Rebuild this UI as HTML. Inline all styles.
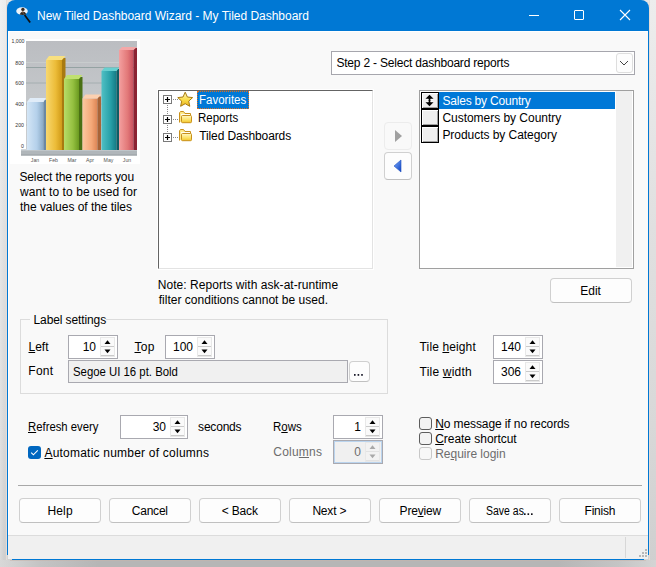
<!DOCTYPE html>
<html><head><meta charset="utf-8"><style>
html,body{margin:0;padding:0}
body{width:656px;height:567px;overflow:hidden;position:relative;background:#e4e4e4;font-family:"Liberation Sans", sans-serif;font-size:12px}
.t{position:absolute;white-space:pre;line-height:15px;font-size:12px;color:#000}
.t u{text-decoration:underline;text-underline-offset:1px}
.a{position:absolute}
.box{position:absolute;box-sizing:border-box;border:1px solid #a9a9b0}
.spn{position:absolute;width:15px;background:#e8e8e8}
.sb{position:absolute;left:1px;width:13px;height:9px;background:#fafafa;border-bottom:1px solid #cacaca;box-sizing:border-box}
.btn{position:absolute;box-sizing:border-box;border:1px solid #d0d0d0;border-bottom-color:#c0c0c0;border-radius:4px;background:#fdfdfd}
.chk{position:absolute;box-sizing:border-box;width:13px;height:13px;border:1px solid #5d5d5d;border-radius:3px;background:#f3f3f3}
</style></head><body>
<!-- shadow -->
<div class=a style="left:0;top:0;width:7px;height:567px;background:linear-gradient(180deg,#ededed 0%,#e0e0e0 40%,#d8d8d8 75%,#cfcfcf 100%)"></div>
<div class=a style="left:0;top:0;width:4px;height:567px;background:linear-gradient(90deg,rgba(255,255,255,0.25),rgba(255,255,255,0))"></div>
<div class=a style="left:6px;top:0;width:1px;height:560px;background:#e6dcd6"></div>
<div class=a style="left:649px;top:0;width:7px;height:567px;background:linear-gradient(180deg,#ededed 0%,#e0e0e0 40%,#d8d8d8 75%,#cfcfcf 100%)"></div>
<div class=a style="left:649px;top:0;width:1px;height:560px;background:#e6dcd6"></div>
<div class=a style="left:0;top:560px;width:656px;height:7px;background:linear-gradient(90deg,#d8d8d8 0%,#c4c4c4 6%,#b6b6b6 15%,#b6b6b6 85%,#c4c4c4 94%,#d4d4d4 100%)"></div>
<div class=a style="left:10px;top:560px;width:636px;height:1px;background:rgba(200,180,170,0.5)"></div>
<!-- window -->
<div class=a style="left:7px;top:0;width:642px;height:560px;background:#0078d4;border-radius:8px 8px 2px 2px"></div>
<div class=a style="left:8px;top:31px;width:640px;height:528px;background:#fff"></div>
<div class=a style="left:9px;top:32px;width:639px;height:527px;background:#f9f9f9"></div>
<div class=a style="left:7px;top:555px;width:1px;height:5px;background:#d2d2d2"></div>
<div class=a style="left:7px;top:559px;width:5px;height:1px;background:#d2d2d2"></div>
<div class=a style="left:648px;top:555px;width:1px;height:5px;background:#d2d2d2"></div>
<div class=a style="left:644px;top:559px;width:5px;height:1px;background:#d2d2d2"></div>
<!-- status bar -->
<div class=a style="left:8px;top:535px;width:640px;height:24px;background:#f0f0f0;border-top:1px solid #dcdcdc;box-sizing:border-box"></div>
<div class=a style="left:625px;top:537px;width:1px;height:21px;background:#d7d7d7"></div>
<svg class=a style="left:637px;top:548px" width="12" height="12">
<g fill="#b8b8b8"><rect x="8" y="1" width="2" height="2"/><rect x="5" y="4" width="2" height="2"/><rect x="8" y="4" width="2" height="2"/>
<rect x="2" y="7" width="2" height="2"/><rect x="5" y="7" width="2" height="2"/><rect x="8" y="7" width="2" height="2"/></g></svg>
<!-- title icon -->
<svg class=a style="left:14px;top:5px" width="20" height="20">
<ellipse cx="8" cy="6.1" rx="5.8" ry="3.8" fill="#eef3f8"/>
<circle cx="8.9" cy="4.4" r="1.7" fill="#3a2a20"/>
<path d="M5.6 9.6 Q6.5 7 8.9 6.6 Q11.3 7 12.4 9.2 Q9 10.4 5.6 9.6 Z" fill="#2e2620"/>
<path d="M8.2 6 L9.4 8.5" stroke="#b08060" stroke-width="0.8"/>
<line x1="10.6" y1="10" x2="16.2" y2="17.6" stroke="#111" stroke-width="1.7"/>
</svg>
<!-- title buttons -->
<div class=a style="left:529px;top:15px;width:10px;height:1px;background:#fff"></div>
<div class=a style="left:574px;top:10px;width:10px;height:10px;box-sizing:border-box;border:1px solid #fff;border-radius:1px"></div>
<svg class=a style="left:619px;top:9px" width="12" height="12"><path d="M1 1 L11 11 M11 1 L1 11" stroke="#fff" stroke-width="1.1"/></svg>
<!-- chart -->
<svg class=a style="left:9px;top:36px" width="131" height="128" viewBox="9 36 131 128">
<defs>
<linearGradient id="pg" x1="0" y1="0" x2="0" y2="1"><stop offset="0" stop-color="#bbbdc1"/><stop offset="0.5" stop-color="#c4c7ca"/><stop offset="1" stop-color="#cacdd0"/></linearGradient>
<linearGradient id="b1" x1="0" y1="0" x2="1" y2="0"><stop offset="0" stop-color="#d4e6f6"/><stop offset="0.6" stop-color="#b4d0ea"/><stop offset="1" stop-color="#88a8c4"/></linearGradient>
<linearGradient id="b2" x1="0" y1="0" x2="1" y2="0"><stop offset="0" stop-color="#f8d870"/><stop offset="0.6" stop-color="#ecbc38"/><stop offset="1" stop-color="#d09a18"/></linearGradient>
<linearGradient id="b3" x1="0" y1="0" x2="1" y2="0"><stop offset="0" stop-color="#b8dc68"/><stop offset="0.6" stop-color="#94c040"/><stop offset="1" stop-color="#6a9a20"/></linearGradient>
<linearGradient id="b4" x1="0" y1="0" x2="1" y2="0"><stop offset="0" stop-color="#fcc8a0"/><stop offset="0.6" stop-color="#f4a878"/><stop offset="1" stop-color="#dc8454"/></linearGradient>
<linearGradient id="b5" x1="0" y1="0" x2="1" y2="0"><stop offset="0" stop-color="#50c0c4"/><stop offset="0.6" stop-color="#28a0a8"/><stop offset="1" stop-color="#147a84"/></linearGradient>
<linearGradient id="b6" x1="0" y1="0" x2="1" y2="0"><stop offset="0" stop-color="#f4a0a0"/><stop offset="0.6" stop-color="#e27878"/><stop offset="1" stop-color="#c85060"/></linearGradient>
</defs>
<rect x="10" y="39" width="130" height="125" fill="#fff"/>
<rect x="26" y="41" width="111" height="110" fill="url(#pg)"/>
<rect x="21" y="149" width="116" height="6.5" fill="#b0b6ba"/>
<rect x="21" y="149" width="116" height="1.5" fill="#d0d6da"/>
<rect x="21" y="154.5" width="116" height="1" fill="#9aa0a4"/>
<g stroke-width="1"><line x1="26" y1="62.5" x2="137" y2="62.5" stroke="#c8cccd"/><line x1="26" y1="67.5" x2="137" y2="67.5" stroke="#94a2a2"/><line x1="26" y1="83" x2="137" y2="83" stroke="#a4aeb0"/><line x1="26" y1="104" x2="137" y2="104" stroke="#b0b6b8"/><line x1="26" y1="125" x2="137" y2="125" stroke="#b4babc"/></g>
<g font-family="Liberation Sans" font-size="5.2" fill="#333" text-anchor="end">
<text x="24.5" y="43">1,000</text><text x="24" y="64.5">800</text><text x="24" y="85">600</text><text x="24" y="106">400</text><text x="24" y="127">200</text><text x="24" y="148">0</text></g>
<g font-family="Liberation Sans" font-size="5.2" fill="#555" text-anchor="middle">
<text x="35" y="162">Jan</text><text x="53.5" y="162">Feb</text><text x="72" y="162">Mar</text><text x="90" y="162">Apr</text><text x="108.5" y="162">May</text><text x="127" y="162">Jun</text></g>
<g>
<rect x="27" y="102" width="16.5" height="48" fill="url(#b1)"/><rect x="43.5" y="100" width="2.5" height="50" fill="#6a88a4"/><polygon points="27,102 30,98 46,98 43.5,102" fill="#e0ecf8"/>
<rect x="46" y="60" width="16" height="90" fill="url(#b2)"/><rect x="62" y="58" width="3.5" height="92" fill="#a87a10"/><polygon points="46,60 49,56 65.5,56 62,60" fill="#f8e080"/>
<rect x="64" y="79" width="15" height="71" fill="url(#b3)"/><rect x="79" y="77" width="3.5" height="73" fill="#4a7014"/><polygon points="64,79 67,75 82.5,75 79,79" fill="#c0e070"/>
<rect x="82.5" y="98.5" width="15" height="51.5" fill="url(#b4)"/><rect x="97.5" y="96.5" width="3.5" height="53.5" fill="#a86438"/><polygon points="82.5,98.5 85.5,94.5 101,94.5 97.5,98.5" fill="#fcd0b0"/>
<rect x="101.5" y="71" width="15" height="79" fill="url(#b5)"/><rect x="116.5" y="69" width="3" height="81" fill="#0e5c64"/><polygon points="101.5,71 104.5,67.5 119.5,67.5 116.5,71" fill="#68d0d0"/>
<rect x="119" y="50" width="14.5" height="100" fill="url(#b6)"/><rect x="133.5" y="48" width="3.5" height="102" fill="#8c2434"/><polygon points="119,50 122,47 137,47 133.5,50" fill="#f4a8a8"/>
</g>
</svg>

<!-- combo -->
<div class=box style="left:331px;top:51px;width:304px;height:24px;background:#fff;border-color:#a6a6ad"></div>
<div class=a style="left:616px;top:53px;width:17px;height:20px;box-sizing:border-box;border:1px solid #dedede;border-radius:3px;background:#fdfdfd"></div>
<svg class=a style="left:616px;top:53px" width="17" height="20"><path d="M4 8 L8 12 L12 8" fill="none" stroke="#444" stroke-width="1"/></svg>
<!-- tree -->
<div class=a style="left:157px;top:89px;width:217px;height:181px;background:#fff"></div>
<div class=a style="left:158px;top:90px;width:215px;height:179px;box-sizing:border-box;border:1px solid #646464;border-right-color:#e3e3e3;border-bottom-color:#e3e3e3;background:#fff"></div>
<svg class=a style="left:158px;top:90px" width="60" height="60">
<g fill="none" stroke="#7a7a7a" stroke-width="1">
<rect x="5.5" y="5.5" width="8" height="8"/><rect x="5.5" y="25.5" width="8" height="8"/><rect x="5.5" y="43.5" width="8" height="8"/></g>
<g stroke="#000" stroke-width="1.2"><path d="M7 9.5 H12 M9.5 7 V12"/><path d="M7 29.5 H12 M9.5 27 V32"/><path d="M7 47.5 H12 M9.5 45 V50"/></g>
<g fill="#8a8a8a">
<rect x="15" y="9" width="1" height="1"/><rect x="17" y="9" width="1" height="1"/><rect x="19" y="9" width="1" height="1"/>
<rect x="15" y="29" width="1" height="1"/><rect x="17" y="29" width="1" height="1"/><rect x="19" y="29" width="1" height="1"/>
<rect x="15" y="47" width="1" height="1"/><rect x="17" y="47" width="1" height="1"/><rect x="19" y="47" width="1" height="1"/>
<rect x="9" y="15" width="1" height="1"/><rect x="9" y="17" width="1" height="1"/><rect x="9" y="19" width="1" height="1"/><rect x="9" y="21" width="1" height="1"/><rect x="9" y="23" width="1" height="1"/>
<rect x="9" y="35" width="1" height="1"/><rect x="9" y="37" width="1" height="1"/><rect x="9" y="39" width="1" height="1"/><rect x="9" y="41" width="1" height="1"/>
</g>
<defs><linearGradient id="gy" x1="0" y1="0" x2="0" y2="1"><stop offset="0" stop-color="#fff8c0"/><stop offset="0.55" stop-color="#fadc48"/><stop offset="1" stop-color="#e8b020"/></linearGradient>
<linearGradient id="gf" x1="0" y1="0" x2="0" y2="1"><stop offset="0" stop-color="#fff8c8"/><stop offset="0.6" stop-color="#fbe066"/><stop offset="1" stop-color="#f2c428"/></linearGradient>
<linearGradient id="gf2" x1="0" y1="0" x2="0" y2="1"><stop offset="0" stop-color="#fff0a0"/><stop offset="1" stop-color="#f0c838"/></linearGradient></defs>
<polygon points="27.20,2.20 29.37,7.01 34.62,7.59 30.72,11.14 31.78,16.31 27.20,13.70 22.62,16.31 23.68,11.14 19.78,7.59 25.03,7.01" fill="url(#gy)" stroke="#a87a10" stroke-width="1" stroke-linejoin="round"/>
<g transform="translate(0,0)">
<path d="M21.5 32.5 V22.8 L22.5 21.5 H25.5 L27 23.5 H32.5 V26" fill="#fde88a" stroke="#c8901c" stroke-width="1"/>
<rect x="23" y="24" width="9" height="2" fill="#fffdf0"/>
<rect x="23.5" y="25.5" width="10" height="7.2" rx="1" fill="url(#gf)" stroke="#c8901c" stroke-width="1"/>
</g>
<g transform="translate(0,18)">
<path d="M21.5 32.5 V22.8 L22.5 21.5 H25.5 L27 23.5 H32.5 V26" fill="#fde88a" stroke="#c8901c" stroke-width="1"/>
<rect x="23" y="24" width="9" height="2" fill="#fffdf0"/>
<rect x="23.5" y="25.5" width="10" height="7.2" rx="1" fill="url(#gf)" stroke="#c8901c" stroke-width="1"/>
</g>
</svg>
<div class=a style="left:197px;top:91px;width:52px;height:18px;background:#0078d7;box-sizing:border-box;border:1px dotted #e07020"></div>
<!-- arrow buttons -->
<div class=a style="left:384px;top:122px;width:28px;height:28px;box-sizing:border-box;border:1px solid #ececec;border-radius:4px"></div>
<svg class=a style="left:384px;top:122px" width="28" height="28"><polygon points="11,8 18,14 11,20" fill="#a0a0a0"/></svg>
<div class=btn style="left:384px;top:152px;width:28px;height:28px"></div>
<svg class=a style="left:384px;top:152px" width="28" height="28"><defs><linearGradient id="gb" x1="0" y1="0" x2="1" y2="1"><stop offset="0" stop-color="#7ab0ff"/><stop offset="1" stop-color="#1040c0"/></linearGradient></defs><polygon points="17,8 10,14 17,20" fill="url(#gb)" stroke="#2050c0" stroke-width="0.6"/></svg>
<!-- listbox -->
<div class=a style="left:419px;top:90px;width:215px;height:179px;box-sizing:border-box;border:1px solid #a0a0a0;background:#fff"></div>
<div class=a style="left:616px;top:91px;width:16px;height:176px;background:#f0f0f0"></div>
<div class=a style="left:439px;top:92px;width:176px;height:17px;background:#0078d7"></div>
<div class=a style="left:421px;top:92px;width:18px;height:17px;box-sizing:border-box;border:1px solid #000;background:#efefef;box-shadow:inset 1px 1px #fff,inset -1px -1px #a0a0a0"></div>
<div class=a style="left:421px;top:109px;width:18px;height:17px;box-sizing:border-box;border:1px solid #000;background:#efefef;box-shadow:inset 1px 1px #fff,inset -1px -1px #a0a0a0"></div>
<div class=a style="left:421px;top:126px;width:18px;height:17px;box-sizing:border-box;border:1px solid #000;background:#efefef;box-shadow:inset 1px 1px #fff,inset -1px -1px #a0a0a0"></div>
<svg class=a style="left:421px;top:92px" width="18" height="17"><polygon points="4.5,6.8 8.5,2.8 12.5,6.8" fill="#000"/><rect x="7.5" y="6" width="2" height="5" fill="#000"/><polygon points="4.5,10.2 12.5,10.2 8.5,14.2" fill="#000"/><rect x="5" y="7" width="2.5" height="0.8" fill="#fff"/><rect x="9.5" y="7" width="2.5" height="0.8" fill="#fff"/><rect x="5" y="9.2" width="2.5" height="0.8" fill="#fff"/><rect x="9.5" y="9.2" width="2.5" height="0.8" fill="#fff"/></svg>
<!-- edit button -->
<div class=btn style="left:550px;top:278px;width:82px;height:25px"></div>
<!-- group box -->
<div class=a style="left:20px;top:319px;width:368px;height:75px;box-sizing:border-box;border:1px solid #dcdcdc"></div>
<div class=a style="left:30px;top:315px;width:76px;height:8px;background:#f9f9f9"></div>
<div class=box style="left:68px;top:360px;width:280px;height:23px;background:#f0f0f0;border-color:#a9a9b0"></div>
<div class=btn style="left:349px;top:361px;width:21px;height:21px"></div>
<svg class=a style="left:349px;top:361px" width="21" height="21"><g fill="#1a1a2a"><rect x="5" y="13" width="1.6" height="1.8"/><rect x="8.6" y="13" width="1.6" height="1.8"/><rect x="12.2" y="13" width="1.6" height="1.8"/></g></svg>
<div class=box style='left:68px;top:335px;width:50px;height:24px;background:#fff;border-color:#a9a9b0'><div class=t style='right:21px;top:3.9px;color:#000'>10</div><div class=spn style='left:31px;top:1px;height:20px'><div class=sb style='top:1px;background:#fafafa;'></div><div class=sb style='top:10px;background:#fafafa;'></div><svg width=15 height=20 style='position:absolute;left:0;top:0'><polygon points='4.5,7 7.5,3.3 10.5,7' fill='#000'/><polygon points='4.5,12.5 10.5,12.5 7.5,16.2' fill='#000'/></svg></div></div>
<div class=box style='left:165px;top:335px;width:50px;height:24px;background:#fff;border-color:#a9a9b0'><div class=t style='right:21px;top:3.9px;color:#000'>100</div><div class=spn style='left:31px;top:1px;height:20px'><div class=sb style='top:1px;background:#fafafa;'></div><div class=sb style='top:10px;background:#fafafa;'></div><svg width=15 height=20 style='position:absolute;left:0;top:0'><polygon points='4.5,7 7.5,3.3 10.5,7' fill='#000'/><polygon points='4.5,12.5 10.5,12.5 7.5,16.2' fill='#000'/></svg></div></div>
<div class=box style='left:493px;top:335px;width:50px;height:24px;background:#fff;border-color:#a9a9b0'><div class=t style='right:21px;top:3.9px;color:#000'>140</div><div class=spn style='left:31px;top:1px;height:20px'><div class=sb style='top:1px;background:#fafafa;'></div><div class=sb style='top:10px;background:#fafafa;'></div><svg width=15 height=20 style='position:absolute;left:0;top:0'><polygon points='4.5,7 7.5,3.3 10.5,7' fill='#000'/><polygon points='4.5,12.5 10.5,12.5 7.5,16.2' fill='#000'/></svg></div></div>
<div class=box style='left:493px;top:360px;width:50px;height:24px;background:#fff;border-color:#a9a9b0'><div class=t style='right:21px;top:3.9px;color:#000'>306</div><div class=spn style='left:31px;top:1px;height:20px'><div class=sb style='top:1px;background:#fafafa;'></div><div class=sb style='top:10px;background:#fafafa;'></div><svg width=15 height=20 style='position:absolute;left:0;top:0'><polygon points='4.5,7 7.5,3.3 10.5,7' fill='#000'/><polygon points='4.5,12.5 10.5,12.5 7.5,16.2' fill='#000'/></svg></div></div>
<div class=box style='left:120px;top:415px;width:68px;height:24px;background:#fff;border-color:#a9a9b0'><div class=t style='right:21px;top:3.9px;color:#000'>30</div><div class=spn style='left:49px;top:1px;height:20px'><div class=sb style='top:1px;background:#fafafa;'></div><div class=sb style='top:10px;background:#fafafa;'></div><svg width=15 height=20 style='position:absolute;left:0;top:0'><polygon points='4.5,7 7.5,3.3 10.5,7' fill='#000'/><polygon points='4.5,12.5 10.5,12.5 7.5,16.2' fill='#000'/></svg></div></div>
<div class=box style='left:333px;top:415px;width:50px;height:24px;background:#fff;border-color:#a9a9b0'><div class=t style='right:21px;top:3.9px;color:#000'>1</div><div class=spn style='left:31px;top:1px;height:20px'><div class=sb style='top:1px;background:#fafafa;'></div><div class=sb style='top:10px;background:#fafafa;'></div><svg width=15 height=20 style='position:absolute;left:0;top:0'><polygon points='4.5,7 7.5,3.3 10.5,7' fill='#000'/><polygon points='4.5,12.5 10.5,12.5 7.5,16.2' fill='#000'/></svg></div></div>
<div class=box style='left:333px;top:440px;width:50px;height:24px;background:#f0f0f0;border-color:#a9a9b0;box-shadow:inset 0 0 0 1px #bad4ee'><div class=t style='right:21px;top:3.9px;color:#6d6d6d'>0</div><div class=spn style='left:31px;top:1px;height:20px'><div class=sb style='top:1px;background:#f2f2f2;border-bottom-color:#e2e2e2'></div><div class=sb style='top:10px;background:#f2f2f2;border-bottom-color:#e2e2e2'></div><svg width=15 height=20 style='position:absolute;left:0;top:0'><polygon points='4.5,7 7.5,3.3 10.5,7' fill='#a8a8a8'/><polygon points='4.5,12.5 10.5,12.5 7.5,16.2' fill='#a8a8a8'/></svg></div></div>
<!-- checkboxes -->
<div class=a style="left:28px;top:446px;width:13px;height:13px;background:#0067c0;border-radius:3px"></div>
<svg class=a style="left:28px;top:446px" width="13" height="13"><path d="M3.2 6.6 L5.4 8.8 L9.8 4.4" fill="none" stroke="#fff" stroke-width="1.1"/></svg>
<div class=chk style="left:419px;top:417px"></div>
<div class=chk style="left:419px;top:432px"></div>
<div class=chk style="left:419px;top:447px;border-color:#c8c8c8;background:#f7f7f7"></div>
<!-- separator -->
<div class=a style="left:18px;top:485px;width:624px;height:1px;background:#a8a8a8"></div>
<div class=btn style='left:19px;top:498px;width:82px;height:25px'></div>
<div class=btn style='left:109px;top:498px;width:82px;height:25px'></div>
<div class=btn style='left:199px;top:498px;width:82px;height:25px'></div>
<div class=btn style='left:289px;top:498px;width:82px;height:25px'></div>
<div class=btn style='left:379px;top:498px;width:82px;height:25px'></div>
<div class=btn style='left:469px;top:498px;width:82px;height:25px'></div>
<div class=btn style='left:559px;top:498px;width:82px;height:25px'></div>
<svg class=a style="left:520px;top:505px" width="16" height="12"><g fill="#101018"><rect x="4" y="8.3" width="1.6" height="1.7"/><rect x="7.5" y="8.3" width="1.6" height="1.7"/><rect x="11" y="8.3" width="1.6" height="1.7"/></g></svg>
<div class=t style='left:37.0px;top:8.6px;color:#fff;letter-spacing:-0.017px'>New Tiled Dashboard Wizard - My Tiled Dashboard</div>
<div class=t style='left:19.4px;top:170.3px;color:#000;letter-spacing:-0.097px'>Select the reports you</div>
<div class=t style='left:20.0px;top:185.0px;color:#000;letter-spacing:0.071px'>want to to be used for</div>
<div class=t style='left:20.0px;top:199.6px;color:#000;letter-spacing:-0.033px'>the values of the tiles</div>
<div class=t style='left:336.4px;top:55.6px;color:#000;letter-spacing:-0.201px'>Step 2 - Select dashboard reports</div>
<div class=t style='left:198.6px;top:92.9px;color:#fff;transform:scaleX(0.9563);transform-origin:0 0'>Favorites</div>
<div class=t style='left:198.4px;top:110.6px;color:#000;transform:scaleX(0.9564);transform-origin:0 0'>Reports</div>
<div class=t style='left:199.2px;top:129.0px;color:#000;letter-spacing:-0.107px'>Tiled Dashboards</div>
<div class=t style='left:442.4px;top:93.9px;color:#fff;letter-spacing:-0.193px'>Sales by Country</div>
<div class=t style='left:442.4px;top:111.0px;color:#000;letter-spacing:-0.030px'>Customers by Country</div>
<div class=t style='left:442.4px;top:127.7px;color:#000;letter-spacing:-0.047px'>Products by Category</div>
<div class=t style='left:157.8px;top:277.7px;color:#000;letter-spacing:0.049px'>Note: Reports with ask-at-runtime</div>
<div class=t style='left:158.7px;top:292.7px;color:#000;letter-spacing:0.016px'>filter conditions cannot be used.</div>
<div class=t style='left:580.3px;top:283.5px;color:#000;letter-spacing:-0.029px'>Edit</div>
<div class=t style='left:33.5px;top:312.7px;color:#000;letter-spacing:-0.105px'>Label settings</div>
<div class=t style='left:28.5px;top:340.4px;color:#000;letter-spacing:-0.005px'><u>L</u>eft</div>
<div class=t style='left:134.5px;top:340.4px;color:#000;letter-spacing:0.320px'><u>T</u>op</div>
<div class=t style='left:28.3px;top:364.4px;color:#000;letter-spacing:0.261px'>Font</div>
<div class=t style='left:73.4px;top:365.2px;color:#000;transform:scaleX(0.9472);transform-origin:0 0'>Segoe UI 16 pt. Bold</div>
<div class=t style='left:419.6px;top:339.6px;color:#000;letter-spacing:0.118px'>Tile <u>h</u>eight</div>
<div class=t style='left:419.6px;top:364.8px;color:#000;letter-spacing:0.194px'>Tile <u>w</u>idth</div>
<div class=t style='left:28.4px;top:419.9px;color:#000;transform:scaleX(0.9437);transform-origin:0 0'><u>R</u>efresh every</div>
<div class=t style='left:198.1px;top:420.2px;color:#000;letter-spacing:-0.201px'>seconds</div>
<div class=t style='left:44.4px;top:445.8px;color:#000;letter-spacing:0.221px'><u>A</u>utomatic number of columns</div>
<div class=t style='left:273.3px;top:419.8px;color:#000;transform:scaleX(0.9562);transform-origin:0 0'>R<u>o</u>ws</div>
<div class=t style='left:273.3px;top:444.6px;color:#6d6d6d;letter-spacing:0.207px'>Colu<u>m</u>ns</div>
<div class=t style='left:435.2px;top:416.8px;color:#000;letter-spacing:-0.101px'><u>N</u>o message if no records</div>
<div class=t style='left:435.2px;top:431.8px;color:#000;letter-spacing:-0.039px'><u>C</u>reate shortcut</div>
<div class=t style='left:435.2px;top:446.8px;color:#6d6d6d;letter-spacing:-0.027px'>Re<u>q</u>uire login</div>
<div class=t style='left:47.5px;top:504.0px;color:#000;letter-spacing:0.138px'>Help</div>
<div class=t style='left:131.8px;top:504.0px;color:#000;letter-spacing:-0.232px'>Cancel</div>
<div class=t style='left:221.7px;top:504.0px;color:#000;letter-spacing:-0.146px'>&lt; Back</div>
<div class=t style='left:312.4px;top:504.0px;color:#000;letter-spacing:-0.183px'>Next &gt;</div>
<div class=t style='left:399.6px;top:504.0px;color:#000;letter-spacing:-0.198px'>Pre<u>v</u>iew</div>
<div class=t style='left:486.4px;top:504.0px;color:#000;transform:scaleX(0.8741);transform-origin:0 0'>Save as</div>
<div class=t style='left:584.6px;top:504.0px;color:#000;letter-spacing:-0.243px'>Finish</div>
</body></html>
